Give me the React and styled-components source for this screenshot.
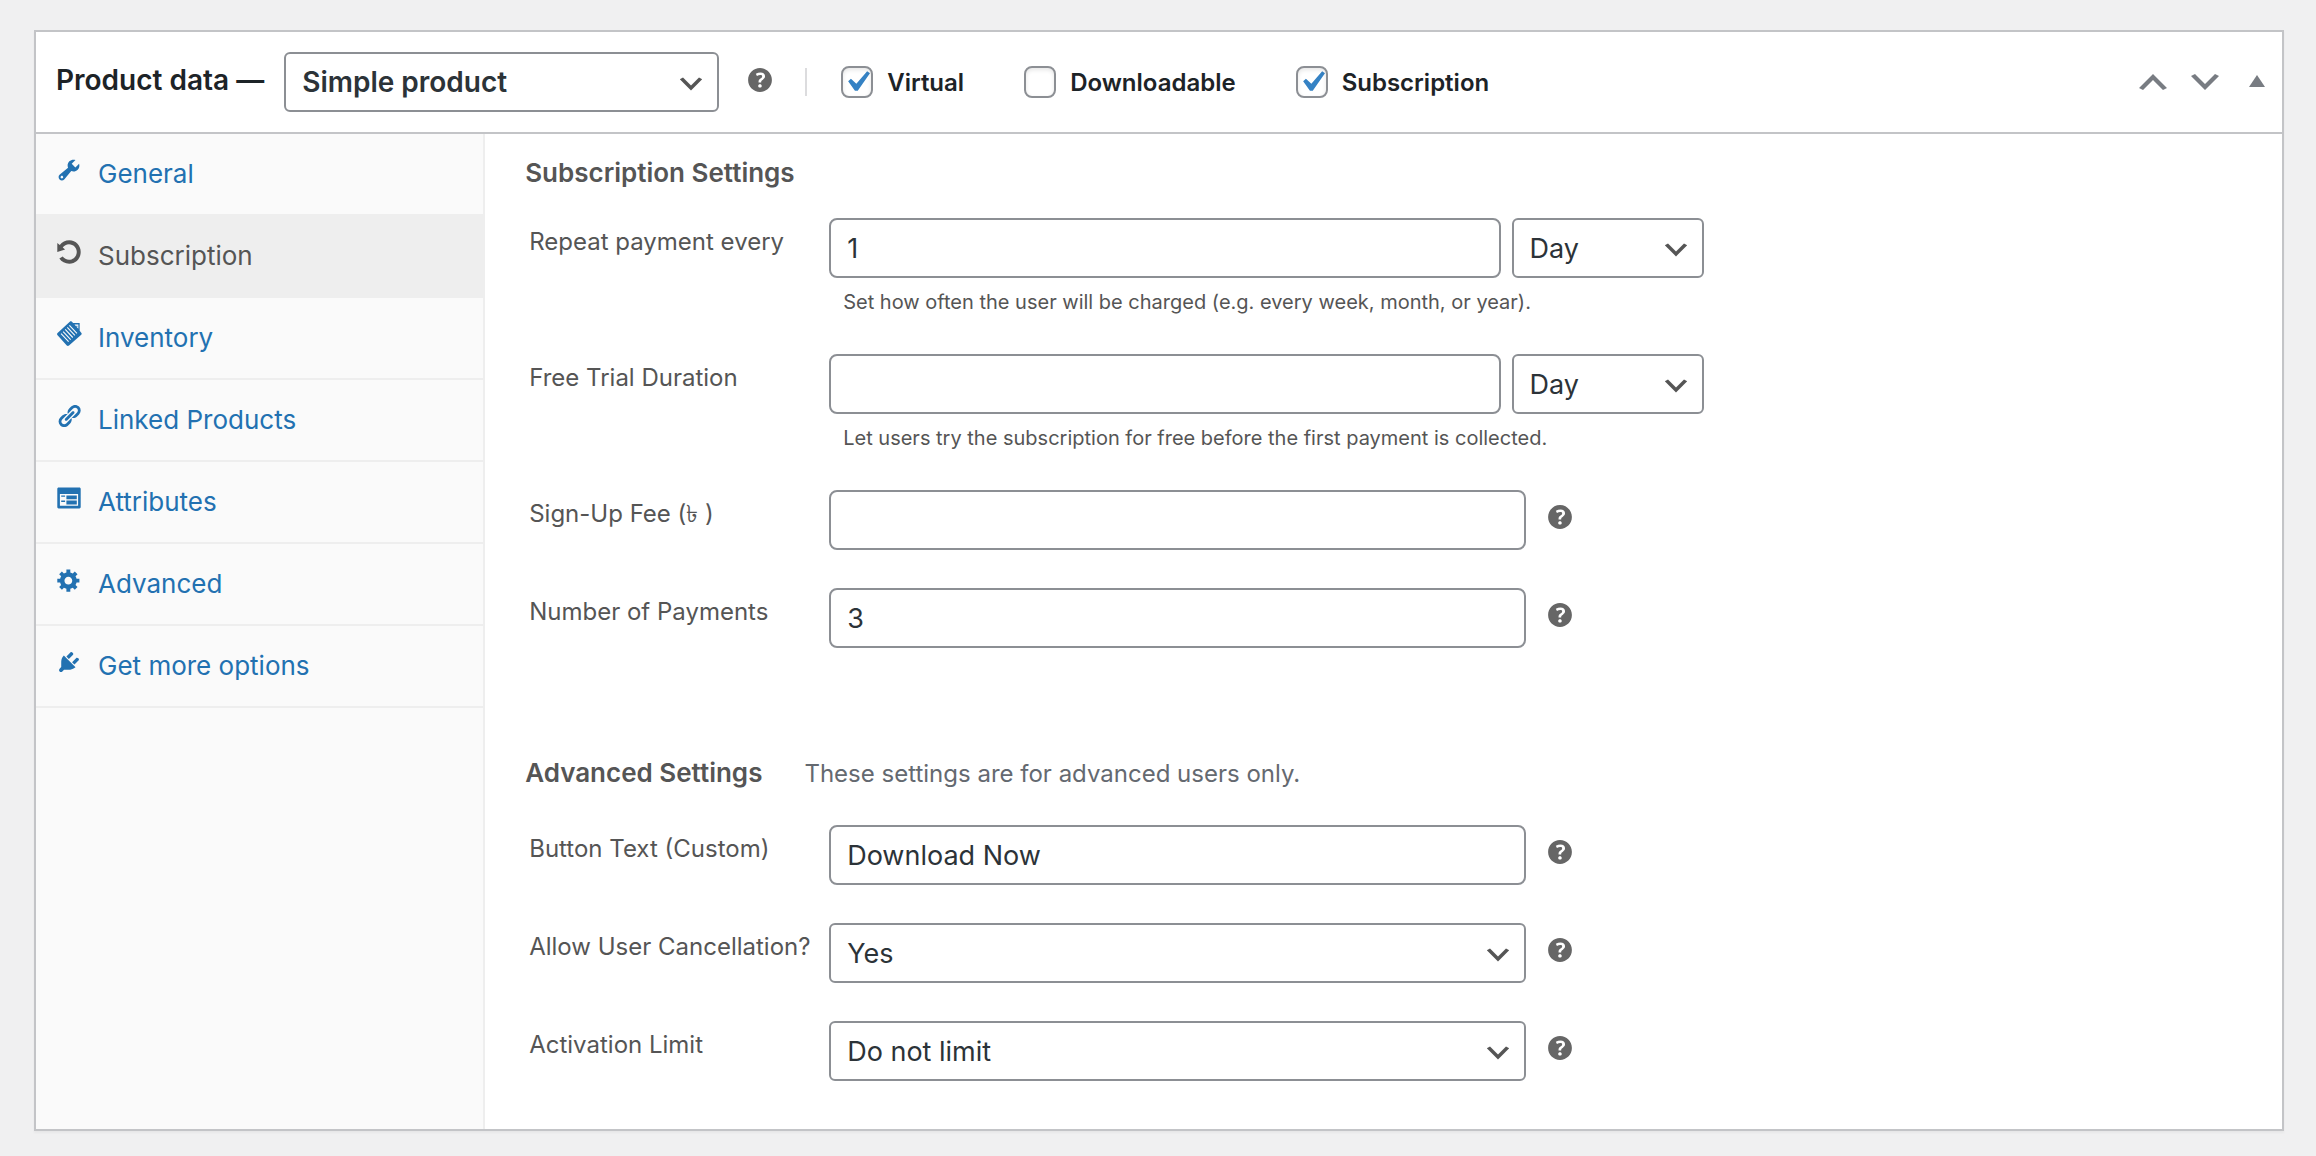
import * as React from "react";
import { useState } from "react";
import styled, { createGlobalStyle } from "styled-components";

const tabs = [
  { id: "general", label: "General", icon: "wrench" },
  { id: "subscription", label: "Subscription", icon: "rotate" },
  { id: "inventory", label: "Inventory", icon: "inventory" },
  { id: "linked", label: "Linked Products", icon: "link" },
  { id: "attributes", label: "Attributes", icon: "form" },
  { id: "advanced", label: "Advanced", icon: "gear" },
  { id: "more", label: "Get more options", icon: "plug" },
];

const icons = {
  wrench:
    "M16.68 9.77c-1.34 1.34-3.3 1.67-4.95.99l-5.41 6.52c-.99.99-2.59.99-3.58 0s-.99-2.59 0-3.57l6.52-5.42c-.68-1.65-.35-3.61.99-4.95 1.28-1.28 3.12-1.62 4.72-1.06l-2.89 2.89 2.82 2.82 2.86-2.87c.53 1.58.18 3.39-1.08 4.65zM3.81 16.21c.4.39 1.04.39 1.43 0 .4-.4.4-1.04 0-1.43-.39-.4-1.03-.4-1.43 0-.39.39-.39 1.03 0 1.43z",
  rotate:
    "M10.25 1.02c5.1 0 8.75 4.04 8.75 9s-3.65 9-8.75 9c-3.2 0-6.02-1.59-7.68-3.99l2.59-1.52c1.1 1.5 2.86 2.51 4.84 2.51 3.3 0 6-2.79 6-6s-2.7-6-6-6c-1.97 0-3.72 1-4.82 2.49L7 8.02l-6 2v-7L2.89 4.6c1.69-2.17 4.36-3.58 7.36-3.58z",
  inventory:
    "M10.6.6c.5-.5 1.1-.5 1.6 0l1 1h5v5.9l1.2 1.5c.5.5.5 1.1 0 1.600L10 18.900c-.5.5-1.200.5-1.700 0L1.200 10.900c-.5-.5-.5-1.200 0-1.700zM14.200 2.700l3 3.300V2.700zm1.500.9h.8v.8h-.8zM10 3.600l5.800 6.200.6-.6-5.800-6.200zM8.400 5.200l5.800 6.200.6-.6L9 4.600zM6.800 6.800l5.800 6.200.6-.6-5.800-6.200zM5.200 8.400l5.800 6.200.6-.6-5.800-6.200zM3.600 10l5.800 6.200.6-.6-5.800-6.200z",
  link:
    "M17.74 2.76c1.68 1.69 1.68 4.41 0 6.1l-1.53 1.52c-1.12 1.12-2.7 1.47-4.14 1.09l2.62-2.61.76-.77.76-.76c.84-.84.84-2.2 0-3.04-.84-.85-2.2-.85-3.04 0l-.77.76-3.38 3.38c-.37-1.44-.02-3.02 1.1-4.14l1.52-1.53c1.69-1.68 4.42-1.68 6.1 0zM8.59 13.43l5.34-5.34c.42-.42.42-1.1 0-1.52-.44-.43-1.13-.39-1.53 0l-5.33 5.34c-.42.42-.42 1.1 0 1.52.44.43 1.13.39 1.52 0zm-.76 2.29l4.14-4.15c.38 1.44.03 3.02-1.09 4.14l-1.52 1.53c-1.69 1.68-4.41 1.68-6.1 0-1.68-1.68-1.68-4.42 0-6.1l1.53-1.52c1.12-1.12 2.7-1.47 4.14-1.1l-4.14 4.15c-.85.84-.85 2.2 0 3.05.84.84 2.2.84 3.04 0z",
  form:
    "M2 2h16c.55 0 1 .45 1 1v14c0 .55-.45 1-1 1H2c-.55 0-1-.45-1-1V3c0-.55.45-1 1-1zm15 14V7H3v9h14zM4 8v1h3V8H4zm4 0v3h8V8H8zm-4 4v1h3v-1H4zm4 0v3h8v-3H8z",
  gear:
    "M18 12h-2.18c-.17.7-.44 1.35-.81 1.93l1.54 1.54-2.1 2.1-1.54-1.54c-.58.36-1.23.63-1.91.79V19H8v-2.18c-.68-.16-1.33-.43-1.91-.79l-1.54 1.54-2.12-2.12 1.54-1.54c-.36-.58-.63-1.23-.79-1.91H1V9.03h2.17c.16-.7.44-1.35.8-1.94L2.43 5.55l2.1-2.1 1.54 1.54c.58-.37 1.24-.64 1.93-.81V2h3v2.18c.68.16 1.33.43 1.91.79l1.54-1.54 2.12 2.12-1.54 1.54c.36.59.64 1.24.8 1.94H18V12zm-8.5 1.5c1.66 0 3-1.34 3-3s-1.34-3-3-3-3 1.34-3 3 1.34 3 3 3z",
  plug:
    "M13.11 4.36L9.87 7.6 8 5.73l3.24-3.24c.35-.34 1.05-.2 1.56.32.52.51.66 1.21.31 1.55zm-8 1.77l.91-1.12 9.01 9.01-1.19.84c-.71.71-2.63 1.16-3.82 1.16H6.14L4.9 17.26c-.59.59-1.54.59-2.12 0-.59-.58-.59-1.53 0-2.12l1.24-1.24v-3.88c0-1.13.4-3.19 1.09-3.89zm7.26 3.97l3.24-3.24c.34-.35 1.04-.21 1.55.31.52.51.66 1.21.31 1.55l-3.24 3.25z",
  help:
    "M17 10c0-3.87-3.14-7-7-7-3.87 0-7 3.13-7 7s3.13 7 7 7c3.86 0 7-3.13 7-7zm-6.3 1.48H9.14v-.43c0-.38.08-.7.24-.98s.46-.57.88-.89c.41-.29.68-.53.81-.71.14-.18.2-.39.2-.62 0-.25-.09-.44-.28-.58-.19-.13-.45-.19-.79-.19-.58 0-1.25.19-2 .57l-.64-1.28c.87-.49 1.8-.74 2.77-.74.81 0 1.45.2 1.92.58.48.39.71.91.71 1.55 0 .43-.09.8-.29 1.11-.19.32-.57.67-1.11 1.06-.38.28-.61.49-.71.63-.1.15-.15.34-.15.57v.35zm-1.47 2.74c-.18-.17-.27-.42-.27-.73 0-.33.08-.58.26-.75s.43-.25.77-.25c.32 0 .57.09.75.26s.27.42.27.74c0 .3-.09.55-.27.72-.18.18-.43.27-.75.27-.33 0-.58-.09-.76-.26z",
  up: "M15 14l-5-5-5 5-2-1 7-7 7 7z",
  down: "M5 6l5 5 5-5 2 1-7 7-7-7 2-1z",
  triangle: "M6 12.500l4-6 4 6z",
};

const arrowUrl =
  "data:image/svg+xml,%3Csvg xmlns='http://www.w3.org/2000/svg' viewBox='0 0 20 20'%3E%3Cpath d='M5 6l5 5 5-5 2 1-7 7-7-7 2-1z' fill='%23555'/%3E%3C/svg%3E";
const checkUrl =
  "data:image/svg+xml,%3Csvg xmlns='http://www.w3.org/2000/svg' viewBox='0 0 20 20'%3E%3Cpath d='M14.83 4.89l1.34.94-5.81 8.38H9.02L5.78 9.67l1.34-1.25 2.57 2.4z' fill='%233582c4'/%3E%3C/svg%3E";

function Icon({ name, size }) {
  return (
    <svg width={size} height={size} viewBox="0 0 20 20" fill="currentColor" fillRule="evenodd" aria-hidden="true">
      <path d={icons[name]} />
    </svg>
  );
}

function Help({ label }) {
  return (
    <HelpTip role="img" aria-label={label}>
      <Icon name="help" size={34} />
    </HelpTip>
  );
}

function Toggle({ id, label, defaultChecked }) {
  return (
    <ToggleLabel htmlFor={id}>
      <Checkbox id={id} type="checkbox" defaultChecked={defaultChecked} />
      {label}
    </ToggleLabel>
  );
}

function PeriodField({ id, label, value, hint }) {
  return (
    <Row>
      <Label htmlFor={id}>{label}</Label>
      <PeriodGroup>
        <Controls>
          <TextInput id={id} type="text" defaultValue={value} />
          <PeriodSelect aria-label={label + " period"} defaultValue="Day">
            <option>Day</option>
            <option>Week</option>
            <option>Month</option>
            <option>Year</option>
          </PeriodSelect>
        </Controls>
        <Hint>{hint}</Hint>
      </PeriodGroup>
    </Row>
  );
}

function TextField({ id, label, value }) {
  return (
    <Row>
      <Label htmlFor={id}>{label}</Label>
      <Field>
        <TextInput id={id} type="text" defaultValue={value} />
      </Field>
      <Help label={"Help: " + label} />
    </Row>
  );
}

function SelectField({ id, label, options }) {
  return (
    <Row>
      <Label htmlFor={id}>{label}</Label>
      <Field>
        <Select id={id} defaultValue={options[0]}>
          {options.map((option) => (
            <option key={option}>{option}</option>
          ))}
        </Select>
      </Field>
      <Help label={"Help: " + label} />
    </Row>
  );
}

export default function App() {
  const [active, setActive] = useState("subscription");

  return (
    <>
      <GlobalStyle />
      <PostBox>
        <Header>
          <Title htmlFor="product-type">Product data —</Title>
          <TypeSelect id="product-type" defaultValue="Simple product">
            <option>Simple product</option>
            <option>Grouped product</option>
            <option>Variable product</option>
          </TypeSelect>
          <Help label="Help: product type" />
          <Divider />
          <Toggles>
            <Toggle id="virtual" label="Virtual" defaultChecked />
            <Toggle id="downloadable" label="Downloadable" />
            <Toggle id="is-subscription" label="Subscription" defaultChecked />
          </Toggles>
          <Handles>
            <HandleButton type="button" aria-label="Move up">
              <Icon name="up" size={40} />
            </HandleButton>
            <HandleButton type="button" aria-label="Move down">
              <Icon name="down" size={40} />
            </HandleButton>
            <HandleButton type="button" aria-label="Toggle panel">
              <Icon name="triangle" size={40} />
            </HandleButton>
          </Handles>
        </Header>
        <Body>
          <Tabs>
            {tabs.map((tab) => (
              <li key={tab.id}>
                <TabLink href={"#" + tab.id} $active={tab.id === active} onClick={() => setActive(tab.id)}>
                  <Icon name={tab.icon} size={26} />
                  {tab.label}
                </TabLink>
              </li>
            ))}
          </Tabs>
          <Panel>
            <Section>
              <SectionHead>
                <Heading>Subscription Settings</Heading>
              </SectionHead>
              <PeriodField
                id="repeat"
                label="Repeat payment every"
                value="1"
                hint="Set how often the user will be charged (e.g. every week, month, or year)."
              />
              <PeriodField
                id="trial"
                label="Free Trial Duration"
                value=""
                hint="Let users try the subscription for free before the first payment is collected."
              />
              <TextField id="fee" label="Sign-Up Fee (৳ )" value="" />
              <TextField id="payments" label="Number of Payments" value="3" />
            </Section>
            <Section>
              <SectionHead $withNote>
                <Heading>Advanced Settings</Heading>
                <Note>These settings are for advanced users only.</Note>
              </SectionHead>
              <TextField id="button-text" label="Button Text (Custom)" value="Download Now" />
              <SelectField id="cancel" label="Allow User Cancellation?" options={["Yes", "No"]} />
              <SelectField id="limit" label="Activation Limit" options={["Do not limit", "Limit"]} />
            </Section>
          </Panel>
        </Body>
      </PostBox>
    </>
  );
}

const GlobalStyle = createGlobalStyle`
  * {
    box-sizing: border-box;
  }
  body {
    margin: 0;
    background: #f0f0f1;
    color: #1d2327;
    font-family: Inter, "Noto Sans", sans-serif;
  }
`;

const PostBox = styled.section`
  margin: 30px 32px 25px 34px;
  border: 2px solid #c3c4c7;
  background: #fff;
  box-shadow: 0 2px 2px rgba(0, 0, 0, 0.04);
`;

const HelpTip = styled.span`
  display: flex;
  color: #666;
`;

const Header = styled.header`
  display: flex;
  align-items: center;
  height: 102px;
  padding: 0 5px 0 20px;
  border-bottom: 2px solid #c3c4c7;

  & > ${HelpTip} {
    margin-bottom: 4px;
  }
`;

const Title = styled.label`
  margin: 0 20px 4px 0;
  font-size: 28px;
  font-weight: 600;
  white-space: nowrap;
`;

const TextInput = styled.input`
  flex: 1;
  min-width: 0;
  width: 100%;
  height: 60px;
  padding: 0 16px;
  border: 2px solid #8c8f94;
  border-radius: 8px;
  background: #fff;
  color: #2c3338;
  font-family: inherit;
  font-size: 27px;
`;

const Select = styled.select`
  width: 100%;
  height: 60px;
  padding: 0 48px 0 16px;
  border: 2px solid #8c8f94;
  border-radius: 6px;
  background: #fff url("${arrowUrl}") no-repeat right 10px top calc(50% + 2px) / 32px 32px;
  color: #2c3338;
  font-family: inherit;
  font-size: 27px;
  appearance: none;
`;

const TypeSelect = styled(Select)`
  width: 435px;
  margin-right: 24px;
  font-size: 28px;
  font-weight: 600;
`;

const PeriodSelect = styled(Select)`
  width: 192px;
`;

const Divider = styled.span`
  width: 2px;
  height: 28px;
  margin: 0 34px 0 28px;
  background: #dcdcde;
`;

const Toggles = styled.div`
  display: flex;
  gap: 60px;
`;

const ToggleLabel = styled.label`
  display: flex;
  align-items: center;
  gap: 14px;
  font-size: 24px;
  font-weight: 600;
`;

const Checkbox = styled.input`
  width: 32px;
  height: 32px;
  margin: 0;
  border: 2px solid #8c8f94;
  border-radius: 8px;
  background: #fff;
  box-shadow: inset 0 2px 4px rgba(0, 0, 0, 0.1);
  appearance: none;

  &:checked {
    background: #fff url("${checkUrl}") no-repeat center / 42px 42px;
  }
`;

const Handles = styled.div`
  display: flex;
  gap: 12px;
  margin-left: auto;
`;

const HandleButton = styled.button`
  display: flex;
  padding: 0;
  border: none;
  background: none;
  color: #787c82;
  cursor: pointer;
`;

const Body = styled.div`
  display: flex;
`;

const Tabs = styled.ul`
  flex: none;
  width: 20%;
  margin: 0;
  padding: 0;
  border-right: 2px solid #eee;
  background: #fafafa;
  list-style: none;
`;

const TabLink = styled.a`
  display: flex;
  align-items: baseline;
  gap: 16px;
  padding: 20px;
  border-bottom: 2px solid #eee;
  background: ${(props) => (props.$active ? "#eee" : "transparent")};
  color: ${(props) => (props.$active ? "#555" : "#2271b1")};
  font-size: 26px;
  line-height: 40px;
  text-decoration: none;
`;

const Panel = styled.div`
  flex: 1;
  min-width: 0;
  padding: 19px 4px 48px 44px;
`;

const Section = styled.div`
  display: flex;
  flex-direction: column;
  gap: 38px;

  & + & {
    margin-top: 105px;
  }
`;

const SectionHead = styled.div`
  display: flex;
  align-items: baseline;
  gap: 42px;
  margin: 0 0 ${(props) => (props.$withNote ? "-7px" : "-13px")} -4px;
  line-height: 40px;
`;

const Heading = styled.h2`
  margin: 0;
  color: #555;
  font-size: 26px;
  font-weight: 600;
`;

const Note = styled.span`
  color: #646970;
  font-size: 24px;
`;

const Row = styled.div`
  display: flex;
  align-items: flex-start;

  & > ${HelpTip} {
    margin: 10px 0 0 17px;
  }
`;

const Label = styled.label`
  flex: none;
  width: 300px;
  color: #555;
  font-size: 24px;
  line-height: 48px;
`;

const PeriodGroup = styled.div`
  width: 50%;
`;

const Controls = styled.div`
  display: flex;
  gap: 11px;
`;

const Field = styled.div`
  width: calc(50% - 178px);
`;

const Hint = styled.p`
  margin: 10px 0 0 14px;
  color: #555;
  font-size: 20px;
  line-height: 28px;
`;
